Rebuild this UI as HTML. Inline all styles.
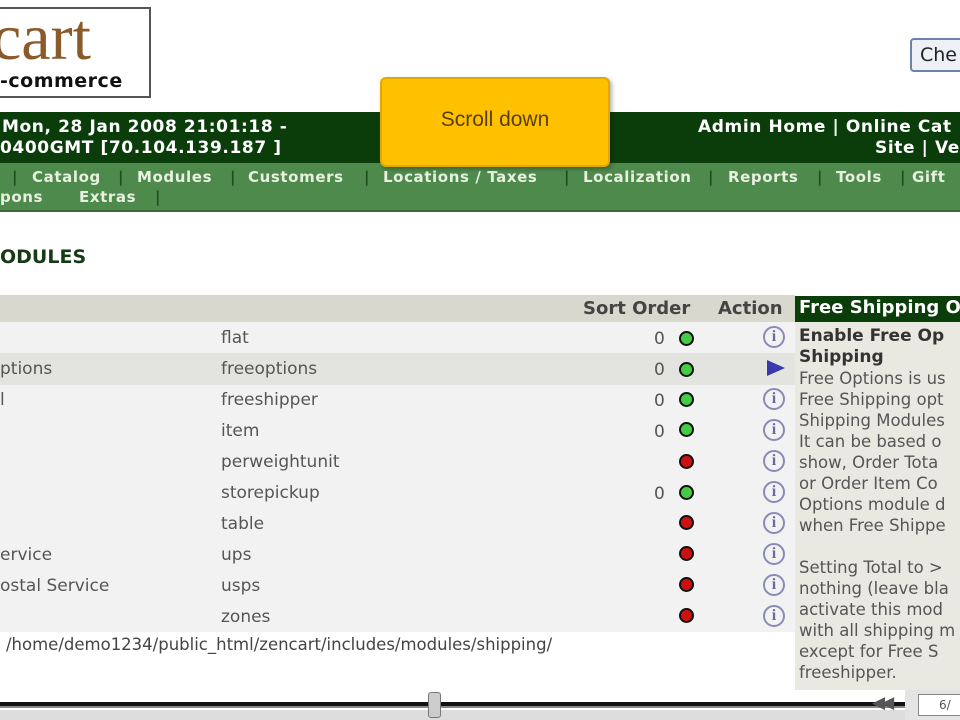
<!DOCTYPE html>
<html><head><meta charset="utf-8"><style>
*{margin:0;padding:0;box-sizing:border-box}
body{width:960px;height:720px;overflow:hidden;background:#fff;font-family:"DejaVu Sans","Liberation Sans",sans-serif;position:relative}
.a{position:absolute;white-space:nowrap}
.logo{left:-4px;top:7px;width:155px;height:91px;border:2px solid #555;background:#fff}
.bar1{left:0;top:112px;width:960px;height:51px;background:#0b3d0b}
.bar2{left:0;top:163px;width:960px;height:49px;background:#4f8a4d;border-bottom:2px solid #3a6a38}
.w{color:#fff;font-weight:bold;font-size:17px;letter-spacing:0.6px}
.n{color:#e8f0e0;font-weight:bold;font-size:15px;letter-spacing:0.6px;top:168px}
.n2{top:188px}
.sep{color:#1f4d1f;font-weight:bold;font-size:15px;top:168px}
.pop{left:380px;top:77px;width:230px;height:90px;background:#ffc000;border-radius:6px;border:2px solid #e0a800;box-shadow:2px 2px 4px rgba(0,0,0,.3);font-family:"Liberation Sans",sans-serif;font-size:21px;color:#5a4000;text-align:center;padding-top:29px}
.t{font-size:17px;color:#555}
.dot{width:15px;height:15px;border-radius:50%;border:2px solid #111}
.g{background:#4c4}
.r{background:#c11}
.info{width:22px;height:22px;border-radius:50%;border:2px solid #8a8ab8;color:#6a6aa0;font-size:16px;text-align:center;line-height:18px;font-family:"Liberation Serif",serif;font-weight:bold}
.p{font-size:16.5px;color:#555;line-height:21px}
</style></head><body>
<div class="a logo"></div>
<div class="a" style="left:-8px;top:0px;font-family:'Liberation Serif',serif;font-size:66px;color:#8b5a2b">cart</div>
<div class="a" style="left:0;top:70px;font-size:19px;font-weight:bold;color:#111;letter-spacing:0.5px">-commerce</div>
<div class="a" style="left:910px;top:38px;width:60px;height:34px;border:2px solid #6a84a8;border-radius:4px;background:#eef0f8;font-size:19px;padding:4px 8px;color:#222">Che</div>
<div class="a bar1"></div>
<div class="a w" style="left:2px;top:117px">Mon, 28 Jan 2008 21:01:18 -</div>
<div class="a w" style="left:0;top:138px">0400GMT [70.104.139.187 ]</div>
<div class="a w" style="left:698px;top:117px">Admin Home | Online Cat</div>
<div class="a w" style="left:875px;top:138px">Site | Ve</div>
<div class="a bar2"></div>
<div class="a sep" style="left:12px">|</div>
<div class="a n" style="left:32px">Catalog</div>
<div class="a sep" style="left:118px">|</div>
<div class="a n" style="left:137px">Modules</div>
<div class="a sep" style="left:230px">|</div>
<div class="a n" style="left:248px">Customers</div>
<div class="a sep" style="left:364px">|</div>
<div class="a n" style="left:383px">Locations / Taxes</div>
<div class="a sep" style="left:564px">|</div>
<div class="a n" style="left:583px">Localization</div>
<div class="a sep" style="left:708px">|</div>
<div class="a n" style="left:728px">Reports</div>
<div class="a sep" style="left:817px">|</div>
<div class="a n" style="left:836px">Tools</div>
<div class="a sep" style="left:900px">|</div>
<div class="a n" style="left:912px">Gift</div>
<div class="a n n2" style="left:0">pons</div>
<div class="a n n2" style="left:79px">Extras</div>
<div class="a sep" style="left:155px;top:188px">|</div>
<div class="a pop">Scroll down</div>
<div class="a" style="left:0;top:246px;font-size:19px;font-weight:bold;color:#163a16">ODULES</div>
<div class="a" style="left:0;top:295px;width:795px;height:27px;background:#d8d8cf"></div>
<div class="a" style="left:583px;top:298px;font-size:18px;font-weight:bold;color:#444">Sort Order</div>
<div class="a" style="left:718px;top:298px;font-size:18px;font-weight:bold;color:#444">Action</div>
<div class="a" style="left:795px;top:296px;width:165px;height:26px;background:#0b3d0b;color:#fff;font-weight:bold;font-size:18px;padding:1px 4px">Free Shipping O</div>
<div class="a" style="left:0;top:322px;width:795px;height:310px;background:#f2f2f2"></div>
<div class="a" style="left:0;top:353px;width:795px;height:32px;background:#e3e3df"></div>
<div class="a" style="left:795px;top:322px;width:165px;height:368px;background:#e9e9e2"></div>

<div class="a t" style="left:221px;top:328px">flat</div>
<div class="a t" style="left:0;top:359px">ptions</div><div class="a t" style="left:221px;top:359px">freeoptions</div>
<div class="a t" style="left:0;top:390px">l</div><div class="a t" style="left:221px;top:390px">freeshipper</div>
<div class="a t" style="left:221px;top:421px">item</div>
<div class="a t" style="left:221px;top:452px">perweightunit</div>
<div class="a t" style="left:221px;top:483px">storepickup</div>
<div class="a t" style="left:221px;top:514px">table</div>
<div class="a t" style="left:0;top:545px">ervice</div><div class="a t" style="left:221px;top:545px">ups</div>
<div class="a t" style="left:0;top:576px">ostal Service</div><div class="a t" style="left:221px;top:576px">usps</div>
<div class="a t" style="left:221px;top:607px">zones</div>

<div class="a t" style="left:654px;top:329px">0</div><div class="a dot g" style="left:679px;top:331px"></div>
<div class="a t" style="left:654px;top:360px">0</div><div class="a dot g" style="left:679px;top:362px"></div>
<div class="a t" style="left:654px;top:391px">0</div><div class="a dot g" style="left:679px;top:392px"></div>
<div class="a t" style="left:654px;top:422px">0</div><div class="a dot g" style="left:679px;top:422px"></div>
<div class="a dot r" style="left:679px;top:454px"></div>
<div class="a t" style="left:654px;top:484px">0</div><div class="a dot g" style="left:679px;top:485px"></div>
<div class="a dot r" style="left:679px;top:515px"></div>
<div class="a dot r" style="left:679px;top:546px"></div>
<div class="a dot r" style="left:679px;top:577px"></div>
<div class="a dot r" style="left:679px;top:608px"></div>

<div class="a info" style="left:763px;top:326px">i</div>
<svg class="a" style="left:766px;top:359px" width="20" height="18"><path d="M1 1 L19 9 L1 17 Z" fill="#3a3ab0"/></svg>
<div class="a info" style="left:763px;top:388px">i</div>
<div class="a info" style="left:763px;top:419px">i</div>
<div class="a info" style="left:763px;top:450px">i</div>
<div class="a info" style="left:763px;top:481px">i</div>
<div class="a info" style="left:763px;top:512px">i</div>
<div class="a info" style="left:763px;top:543px">i</div>
<div class="a info" style="left:763px;top:574px">i</div>
<div class="a info" style="left:763px;top:605px">i</div>

<div class="a" style="left:799px;top:326px;font-size:17px;font-weight:bold;color:#333;line-height:21px">Enable Free Op<br>Shipping</div>
<div class="a p" style="left:799px;top:368px">Free Options is us<br>Free Shipping opt<br>Shipping Modules<br>It can be based o<br>show, Order Tota<br>or Order Item Co<br>Options module d<br>when Free Shippe<br><br>Setting Total to &gt;<br>nothing (leave bla<br>activate this mod<br>with all shipping m<br>except for Free S<br>freeshipper.</div>

<div class="a" style="left:6px;top:635px;font-size:16.5px;color:#444">/home/demo1234/public_html/zencart/includes/modules/shipping/</div>

<div class="a" style="left:0;top:702px;width:905px;height:6px;background:#111;border-bottom:2px solid #888"></div>
<div class="a" style="left:0;top:710px;width:905px;height:10px;background:#ddd"></div>
<div class="a" style="left:428px;top:692px;width:13px;height:26px;background:#ccc;border:1px solid #777;border-radius:3px"></div>
<div class="a" style="left:905px;top:690px;width:55px;height:30px;background:#e4e4e4"></div>
<div class="a" style="left:872px;top:693px;font-size:17px;color:#555;font-weight:bold;letter-spacing:-4px">◀◀</div>
<div class="a" style="left:918px;top:694px;width:45px;height:22px;border:1px solid #888;background:#fff;font-size:12px;padding:3px 20px;color:#555">6/</div>
</body></html>
